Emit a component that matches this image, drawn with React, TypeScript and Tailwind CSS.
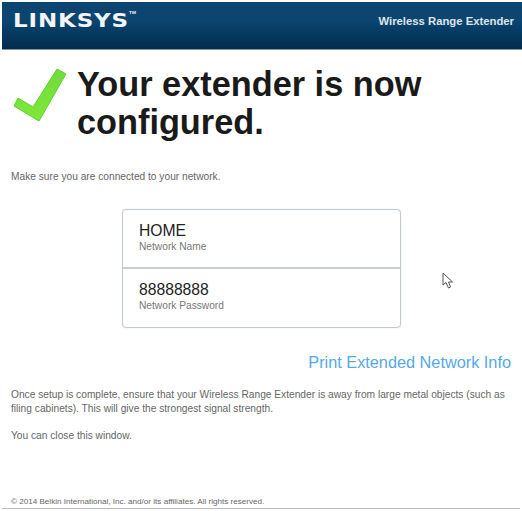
export default function App() {
  return (
    <div className="flex h-[511px] w-[522px] flex-col overflow-hidden bg-white pt-[2px] pl-[2px] font-['Liberation_Sans',sans-serif]">
      <header className="flex h-[48px] w-[520px] items-start justify-between border-b border-[#7f97a8] bg-gradient-to-b from-[#0b4570] from-40% to-[#022c4e] pr-[8px] pl-[11px]">
        <div className="mt-[5px] flex origin-left scale-x-[1.21] items-start font-['DejaVu_Sans',sans-serif] text-[19px] leading-[26px] font-bold tracking-[0.7px] text-[#f2f4f6]">
          LINKSYS
          <span className="mt-[3px] font-['Liberation_Sans',sans-serif] text-[4px] leading-[5px] tracking-normal">TM</span>
        </div>
        <p className="mt-[12px] text-[11.3px] leading-[14px] font-bold text-[#dfe5eb]">Wireless Range Extender</p>
      </header>

      <section className="mt-[15px] flex pl-[11px]">
        <svg width="54" height="54" viewBox="13 69 54 54" className="mt-[3px] shrink-0">
          <defs>
            <linearGradient id="tick" x1="0" y1="0" x2="0" y2="1">
              <stop offset="0" stopColor="#6fdc3a" />
              <stop offset="1" stopColor="#7fe83a" />
            </linearGradient>
          </defs>
          <polygon
            points="18,99 33,108 57,70 66,75 39,122 14,107"
            fill="url(#tick)"
            stroke="#62cf33"
            strokeWidth="1"
            strokeLinejoin="round"
          />
        </svg>
        <h1 className="ml-[10px] text-[34.3px] leading-[38px] font-bold text-[#1a1a1a]">
          Your extender is now
          <br />
          configured.
        </h1>
      </section>

      <p className="mt-[29px] pl-[9px] text-[10.2px] leading-[14px] text-[#666]">Make sure you are connected to your network.</p>

      <div className="relative">
        <div className="mt-[25px] ml-[120px] w-[279px] rounded-[4px] border border-[#c3c9d0] shadow-[0_0_1px_#c3c9d0]">
          <div className="h-[59px] border-b-2 border-[#c9ced5] pt-[12px] pl-[16px]">
            <p className="text-[15.7px] leading-[18px] text-[#222]">HOME</p>
            <p className="text-[10.2px] leading-[14px] text-[#777]">Network Name</p>
          </div>
          <div className="h-[58px] pt-[12px] pl-[16px]">
            <p className="text-[15.7px] leading-[18px] text-[#222]">88888888</p>
            <p className="text-[10.2px] leading-[14px] text-[#777]">Network Password</p>
          </div>
        </div>
        {/* mouse pointer left in the shot */}
        <svg width="12" height="17" viewBox="0 0 12 17" className="absolute top-[88px] left-[440px]">
          <path d="M1 1 L1 13 L4 10.5 L6.5 16 L8.5 15 L6.5 10 L10.5 10 Z" fill="#fff" stroke="#555" strokeWidth="1" strokeLinejoin="round" />
        </svg>
      </div>

      <a className="mt-[25px] block w-[509px] text-right text-[16.3px] leading-[19px] text-[#55a9e6]">Print Extended Network Info</a>

      <p className="mt-[16px] w-[508px] pl-[9px] text-[10.2px] leading-[14px] text-[#666]">
        Once setup is complete, ensure that your Wireless Range Extender is away from large metal objects (such as filing cabinets). This will give the strongest signal strength.
      </p>
      <p className="mt-[13px] pl-[9px] text-[10.2px] leading-[14px] text-[#666]">You can close this window.</p>

      <footer className="mt-auto w-[518px] border-b border-[#bbb] pb-[1px] pl-[9px] text-[8.1px] leading-[10px] text-[#666]">
        © 2014 Belkin International, Inc. and/or its affiliates. All rights reserved.
      </footer>
      <div className="h-[2px]" />
    </div>
  );
}
